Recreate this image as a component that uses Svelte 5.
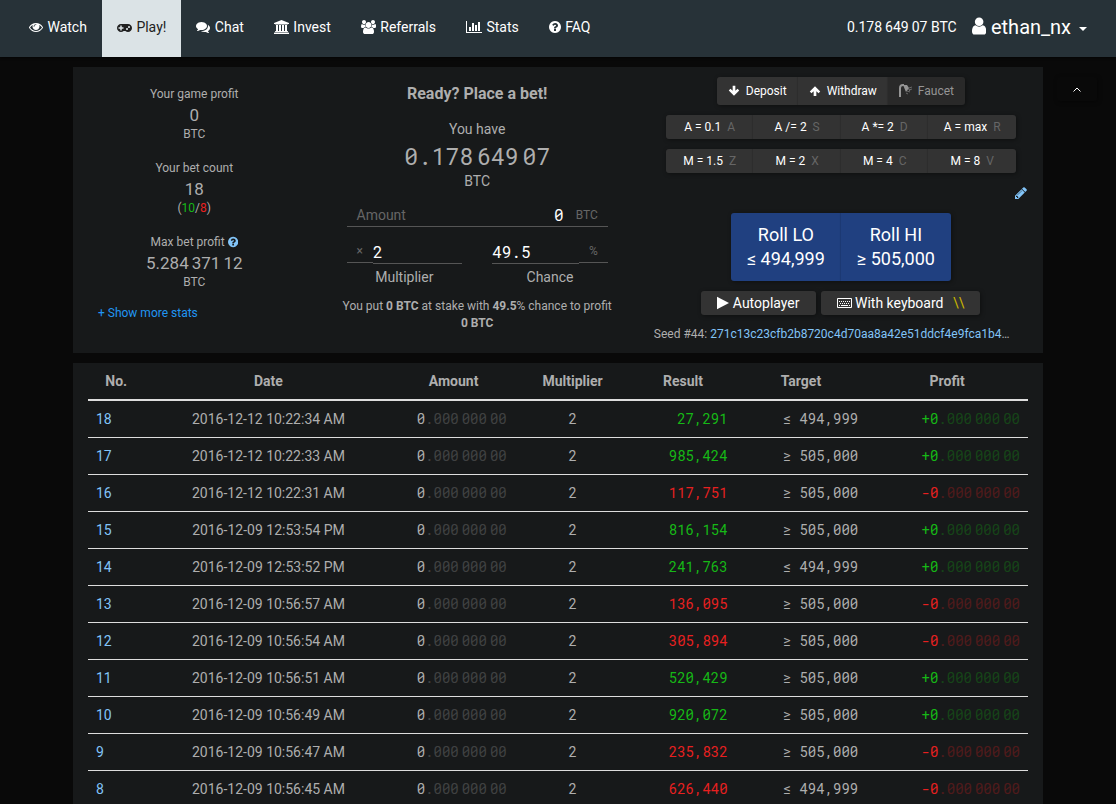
<script lang="ts">
  const icons: Record<string, { w: number; d: string }> = {
    eye: {
      w: 1792,
      d: "M1664 960q-152-236-381-353 61 104 61 225 0 185-131.5 316.5t-316.5 131.5-316.5-131.5-131.5-316.5q0-121 61-225-229 117-381 353 133 205 333.5 326.5t434.5 121.5 434.5-121.5 333.5-326.5zm-720-384q0-20-14-34t-34-14q-125 0-214.5 89.5t-89.5 214.5q0 20 14 34t34 14 34-14 14-34q0-86 61-147t147-61q20 0 34-14t14-34zm848 384q0 34-20 69-140 230-376.5 368.5t-499.5 138.5-499.5-139-376.5-368q-20-35-20-69t20-69q140-229 376.5-368t499.5-139 499.5 139 376.5 368q20 35 20 69z",
    },
    gamepad: {
      w: 1920,
      d: "M832 1088v-128q0-14-9-23t-23-9h-192v-192q0-14-9-23t-23-9h-128q-14 0-23 9t-9 23v192h-192q-14 0-23 9t-9 23v128q0 14 9 23t23 9h192v192q0 14 9 23t23 9h128q14 0 23-9t9-23v-192h192q14 0 23-9t9-23zm576 64q0-53-37.5-90.5t-90.5-37.5-90.5 37.5-37.5 90.5 37.5 90.5 90.5 37.5 90.5-37.5 37.5-90.5zm256-256q0-53-37.5-90.5t-90.5-37.5-90.5 37.5-37.5 90.5 37.5 90.5 90.5 37.5 90.5-37.5 37.5-90.5zm256 128q0 212-150 362t-362 150q-192 0-338-128h-220q-146 128-338 128-212 0-362-150t-150-362 150-362 362-150h896q212 0 362 150t150 362z",
    },
    comments: {
      w: 1792,
      d: "M1408 768q0 139-94 257t-256.5 186.5-353.5 68.5q-86 0-176-16-124 88-278 128-36 9-86 16h-3q-11 0-20.5-8t-11.5-21q-1-3-1-6.5t.5-6.5 2-6l2.5-5 3.5-5.5 4-5 4.5-5 4-4.5q5-6 23-25t26-29.5 22.5-29 25-38.5 20.5-44q-124-72-195-177t-71-224q0-139 94-257t256.5-186.5 353.5-68.5 353.5 68.5 256.5 186.5 94 257zm384 256q0 120-71 224.5t-195 176.5q10 24 20.5 44t25 38.5 22.5 29 26 29.5 23 25q1 1 4 4.5t4.5 5 4 5 3.5 5.5l2.5 5 2 6 .5 6.5-1 6.5q-3 14-13 22t-22 7q-50-7-86-16-154-40-278-128-90 16-176 16-271 0-472-132 58 4 88 4 161 0 309-45t264-129q125-92 192-212t67-254q0-77-23-152 129 71 204 178t75 230z",
    },
    bank: {
      w: 1920,
      d: "M960 0l960 384v128h-128q0 26-20.5 45t-48.5 19h-1526q-28 0-48.5-19t-20.5-45h-128v-128zm-704 640h256v768h128v-768h256v768h128v-768h256v768h128v-768h256v768h59q28 0 48.5 19t20.5 45v64h-1664v-64q0-26 20.5-45t48.5-19h59v-768zm1595 960q28 0 48.5 19t20.5 45v128h-1920v-128q0-26 20.5-45t48.5-19h1782z",
    },
    users: {
      w: 1920,
      d: "M593 896q-162 5-265 128h-134q-82 0-138-40.5t-56-118.5q0-353 124-353 6 0 43.5 21t97.5 42.5 119 21.5q67 0 133-23-5 37-5 66 0 159 93 256zm1071 637q0 120-73 189.5t-194 69.5h-874q-121 0-194-69.5t-73-189.5q0-53 3.5-103.5t14-109 26.5-108.5 43-97.5 62-81 85.5-53.5 111.5-20q10 0 43 21.5t73 48 107 48 135 21.5 135-21.5 107-48 73-48 43-21.5q61 0 111.5 20t85.5 53.5 62 81 43 97.5 26.5 108.5 14 109 3.5 103.5zm-1024-1277q0 106-75 181t-181 75-181-75-75-181 75-181 181-75 181 75 75 181zm704 384q0 159-112.5 271.5t-271.5 112.5-271.5-112.5-112.5-271.5 112.5-271.5 271.5-112.5 271.5 112.5 112.5 271.5zm576 225q0 78-56 118.5t-138 40.5h-134q-103-123-265-128 93-97 93-256 0-29-5-66 66 23 133 23 59 0 119-21.5t97.5-42.5 43.5-21q124 0 124 353zm-128-609q0 106-75 181t-181 75-181-75-75-181 75-181 181-75 181 75 75 181z",
    },
    chart: {
      w: 2048,
      d: "M640 896v512h-256v-512h256zm384-512v1024h-256v-1024h256zm1024 1152v128h-2048v-1536h128v1408h1920zm-640-896v768h-256v-768h256zm384-384v1152h-256v-1152h256z",
    },
    question: {
      w: 1536,
      d: "M896 1376v-192q0-14-9-23t-23-9h-192q-14 0-23 9t-9 23v192q0 14 9 23t23 9h192q14 0 23-9t9-23zm256-672q0-88-55.5-163t-138.5-116-170-41q-243 0-371 213-15 24 8 42l132 100q7 6 19 6 16 0 25-12 53-68 86-92 34-24 86-24 48 0 85.5 26t37.5 59q0 38-20 61t-68 45q-63 28-115.5 86.5t-52.5 125.5v36q0 14 9 23t23 9h192q14 0 23-9t9-23q0-19 21.5-49.5t54.5-49.5q32-18 49-28.5t46-35 44.5-48 28-60.5 12.5-81zm384 192q0 209-103 385.5t-279.5 279.5-385.5 103-385.5-103-279.5-279.5-103-385.5 103-385.5 279.5-279.5 385.5-103 385.5 103 279.5 279.5 103 385.5z",
    },
    user: {
      w: 1280,
      d: "M1280 1399q0 109-62.5 187t-150.5 78h-854q-88 0-150.5-78t-62.5-187q0-85 8.5-160.5t31.5-152 58.5-131 94-89 134.5-34.5q131 128 313 128t313-128q76 0 134.5 34.5t94 89 58.5 131 31.5 152 8.5 160.5zm-256-887q0 159-112.5 271.5t-271.5 112.5-271.5-112.5-112.5-271.5 112.5-271.5 271.5-112.5 271.5 112.5 112.5 271.5z",
    },
    pencil: {
      w: 1792,
      d: "M491 1536l91-91-235-235-91 91v107h128v128h107zm523-928q0-22-22-22-10 0-17 7l-542 542q-7 7-7 17 0 22 22 22 10 0 17-7l542-542q7-7 7-17zm-54-192l416 416-832 832h-416v-416zm683 96q0 53-37 90l-166 166-416-416 166-165q36-38 90-38 53 0 91 38l235 234q37 39 37 91z",
    },
    play: { w: 1536, d: "M0 96L1536 896L0 1696z" },
    down: {
      w: 1792,
      d: "M696 120h400v740l330-300 250 250-780 800-780-800 250-250 330 300z",
    },
    up: {
      w: 1792,
      d: "M696 1660h400v-740l330 300 250-250-780-800-780 800 250 250 330-300z",
    },
  };

  const nav = [
    { icon: "eye", label: "Watch" },
    { icon: "gamepad", label: "Play!", active: true },
    { icon: "comments", label: "Chat" },
    { icon: "bank", label: "Invest" },
    { icon: "users", label: "Referrals" },
    { icon: "chart", label: "Stats" },
    { icon: "question", label: "FAQ" },
  ];

  const amountKeys = [
    ["A = 0.1", "A"],
    ["A /= 2", "S"],
    ["A *= 2", "D"],
    ["A = max", "R"],
  ];
  const multiplierKeys = [
    ["M = 1.5", "Z"],
    ["M = 2", "X"],
    ["M = 4", "C"],
    ["M = 8", "V"],
  ];

  const LO = "≤ 494,999";
  const HI = "≥ 505,000";

  const bets = [
    { no: 18, date: "2016-12-12 10:22:34 AM", result: "27,291", target: LO, win: true },
    { no: 17, date: "2016-12-12 10:22:33 AM", result: "985,424", target: HI, win: true },
    { no: 16, date: "2016-12-12 10:22:31 AM", result: "117,751", target: HI, win: false },
    { no: 15, date: "2016-12-09 12:53:54 PM", result: "816,154", target: HI, win: true },
    { no: 14, date: "2016-12-09 12:53:52 PM", result: "241,763", target: LO, win: true },
    { no: 13, date: "2016-12-09 10:56:57 AM", result: "136,095", target: HI, win: false },
    { no: 12, date: "2016-12-09 10:56:54 AM", result: "305,894", target: HI, win: false },
    { no: 11, date: "2016-12-09 10:56:51 AM", result: "520,429", target: HI, win: true },
    { no: 10, date: "2016-12-09 10:56:49 AM", result: "920,072", target: HI, win: true },
    { no: 9, date: "2016-12-09 10:56:47 AM", result: "235,832", target: HI, win: false },
    { no: 8, date: "2016-12-09 10:56:45 AM", result: "626,440", target: LO, win: false },
  ];

  let amount = $state("0");
  let multiplier = $state("2");
  let chance = $state("49.5");
</script>

{#snippet icon(name: string)}
  <svg
    class="icon"
    viewBox="0 0 {icons[name].w} 1792"
    style:width="{icons[name].w / 1792}em"
    aria-hidden="true"
  >
    <path d={icons[name].d} />
  </svg>
{/snippet}

{#snippet grouped(head: string, mid: string, tail: string)}
  {head}<span class="grp">{mid}</span><span class="grp">{tail}</span>
{/snippet}

{#snippet keyRow(keys: string[][])}
  <div class="btn-group keys">
    {#each keys as [label, key]}
      <button class="btn" type="button">{label} <span class="hotkey">{key}</span></button>
    {/each}
  </div>
{/snippet}

<nav class="navbar">
  <ul class="menu">
    {#each nav as item}
      <li>
        <a href="#{item.icon}" class:active={item.active}>{@render icon(item.icon)} {item.label}</a>
      </li>
    {/each}
  </ul>
  <div class="account">
    <span class="balance">{@render grouped("0.178", "649", "07")} BTC</span>
    <a href="#account" class="username">{@render icon("user")} ethan_nx <span class="caret"></span></a>
  </div>
</nav>

<div class="page">
  <main>
    <section class="panel game">
      <div class="stats">
        <div class="stat">
          <div>Your game profit</div>
          <div class="value">0</div>
          <div class="unit">BTC</div>
        </div>
        <div class="stat">
          <div>Your bet count</div>
          <div class="value">18</div>
          <div class="unit">(<span class="win">10</span>/<span class="lose">8</span>)</div>
        </div>
        <div class="stat">
          <div>Max bet profit <span class="help">{@render icon("question")}</span></div>
          <div class="value">{@render grouped("5.284", "371", "12")}</div>
          <div class="unit">BTC</div>
        </div>
        <a href="#stats" class="more">+ Show more stats</a>
      </div>

      <div class="bet">
        <h1>Ready? Place a bet!</h1>
        <div class="have">You have</div>
        <div class="total">{@render grouped("0.178", "649", "07")}</div>
        <div class="currency">BTC</div>
        <div class="fields">
          <div class="field amount">
            <label for="amount">Amount</label>
            <input id="amount" type="text" bind:value={amount} />
            <span>BTC</span>
          </div>
          <div class="pair">
            <div class="half">
              <div class="field split">
                <span class="addon">×</span>
                <input id="multiplier" type="text" bind:value={multiplier} />
              </div>
              <label for="multiplier">Multiplier</label>
            </div>
            <div class="half">
              <div class="field split">
                <input id="chance" type="text" bind:value={chance} />
                <span class="addon">%</span>
              </div>
              <label for="chance">Chance</label>
            </div>
          </div>
        </div>
        <p class="summary">
          You put <b>0 BTC</b> at stake with <b>49.5</b>% chance to profit <b class="nowrap">0 BTC</b>
        </p>
      </div>

      <div class="controls">
        <div class="btn-group wallet">
          <button class="btn" type="button">{@render icon("down")} Deposit</button>
          <button class="btn" type="button">{@render icon("up")} Withdraw</button>
          <button class="btn" type="button" disabled>
            <svg class="faucet" viewBox="0 0 14 14" aria-hidden="true">
              <path d="M1 13V4Q1 1 4 1H5" fill="none" stroke="currentColor" stroke-width="2" />
              <path d="M4 1H8L10 4L7 8Z" fill="currentColor" />
              <path
                d="M10 4L13 3M10 6L13 5M8 7L11 8M7 9L9 10M8 3L11 7"
                fill="none"
                stroke="currentColor"
                opacity=".6"
              />
            </svg>
            Faucet
          </button>
        </div>
        {@render keyRow(amountKeys)}
        {@render keyRow(multiplierKeys)}
        <button class="edit" type="button" aria-label="Edit hotkeys">{@render icon("pencil")}</button>
        <div class="btn-group roll">
          <button class="btn" type="button">Roll LO<br />{LO}</button>
          <button class="btn" type="button">Roll HI<br />{HI}</button>
        </div>
        <div class="modes">
          <button class="btn" type="button">{@render icon("play")} Autoplayer</button>
          <button class="btn" type="button">
            <svg class="keyboard" viewBox="0 0 15 10" aria-hidden="true">
              <path d="M.5 .5H14.5V9.5H.5Z" fill="none" stroke="currentColor" />
              <path
                d="M2 3.5H13M3 5.5H13"
                fill="none"
                stroke="currentColor"
                stroke-dasharray="1 1"
              />
              <path d="M2 7.5H3M4 7.5H11M12 7.5H13" fill="none" stroke="currentColor" />
            </svg>
            With keyboard <span class="slashes">\\</span>
          </button>
        </div>
        <div class="seed">
          Seed #44: <a href="#seed">271c13c23cfb2b8720c4d70aa8a42e51ddcf4e9fca1b4</a>…
        </div>
      </div>
    </section>

    <section class="panel history">
      <table>
        <colgroup>
          <col class="c-no" />
          <col class="c-date" />
          <col class="c-amount" />
          <col class="c-mult" />
          <col class="c-result" />
          <col class="c-target" />
          <col />
        </colgroup>
        <thead>
          <tr>
            <th>No.</th>
            <th>Date</th>
            <th>Amount</th>
            <th>Multiplier</th>
            <th>Result</th>
            <th>Target</th>
            <th>Profit</th>
          </tr>
        </thead>
        <tbody>
          {#each bets as bet}
            <tr>
              <td><a href="#bet-{bet.no}">{bet.no}</a></td>
              <td class="center">{bet.date}</td>
              <td class="num">0<span class="dim">{@render grouped(".000", "000", "00")}</span></td>
              <td class="center">2</td>
              <td class="num" class:win={bet.win} class:lose={!bet.win}>{bet.result}</td>
              <td class="num">{bet.target}</td>
              <td class="num" class:win={bet.win} class:lose={!bet.win}>
                {bet.win ? "+" : "-"}0<span class="dim">{@render grouped(".000", "000", "00")}</span>
              </td>
            </tr>
          {/each}
        </tbody>
      </table>
    </section>
  </main>
  <button class="collapse" type="button" aria-label="Collapse">
    <svg viewBox="0 0 8 5" aria-hidden="true"><path d="M.5 4.5L4 1L7.5 4.5" /></svg>
  </button>
</div>

<style>
  :global(body) {
    background: #090909;
    color: #aeaeae;
    font-family: Roboto, "Liberation Sans", sans-serif;
    font-size: 12px;
    line-height: 20px;
    overflow: hidden;
  }

  a {
    color: #82c4f8;
    text-decoration: none;
  }

  button,
  input {
    font: inherit;
    color: inherit;
    margin: 0;
    padding: 0;
    border: 0;
    background: none;
  }

  .icon {
    height: 1em;
    fill: currentColor;
    vertical-align: -2px;
  }

  .grp {
    margin-left: 3px;
  }

  .win {
    color: #16b816;
  }

  .lose {
    color: #e82020;
  }

  /* Navbar */
  .navbar {
    display: flex;
    justify-content: space-between;
    height: 57px;
    padding: 0 14px;
    background: #273238;
    color: #fff;
    font-size: 14px;
    box-shadow: 0 1px 2px rgba(0, 0, 0, 0.5);
  }

  .menu {
    display: flex;
    margin: 0;
    padding: 0;
    list-style: none;
  }

  .menu a,
  .username {
    display: block;
    padding: 0 15px;
    line-height: 55px;
    color: #fff;
  }

  .menu a.active {
    height: 57px;
    background: #dbe3e6;
    color: #212121;
  }

  .menu .icon {
    margin-right: 1px;
  }

  .account {
    display: flex;
    line-height: 55px;
  }

  .username {
    font-size: 20px;
  }

  .caret {
    display: inline-block;
    margin-left: 3px;
    border: 4px solid transparent;
    border-top-color: #fff;
    border-bottom: 0;
    vertical-align: middle;
  }

  /* Page */
  .page {
    display: grid;
    grid-template-columns: 1fr minmax(0, 970px) 1fr;
    align-items: start;
    padding-top: 10px;
  }

  main {
    grid-column: 2;
  }

  .panel {
    margin-bottom: 10px;
    background: #17191a;
  }

  .collapse {
    width: 40px;
    height: 24px;
    margin: 10px 0 0 14px;
    border-radius: 3px;
    box-shadow: 1px 1px 4px rgba(0, 0, 0, 0.4);
    line-height: 0;
  }

  .collapse svg {
    width: 8px;
    height: 5px;
    fill: none;
    stroke: #fff;
  }

  .game {
    display: grid;
    grid-template-columns: 3fr 4fr 5fr;
    text-align: center;
  }

  .game > div {
    min-width: 0;
    padding: 10px 15px;
  }

  /* Stats */
  .stat {
    padding-top: 7px;
    margin-bottom: 9px;
  }

  .value {
    font-size: 17px;
    line-height: 22px;
  }

  .unit {
    line-height: 16px;
  }

  .help {
    color: #82c4f8;
  }

  .more {
    display: block;
    margin-top: 13px;
    padding-left: 10px;
    text-align: left;
    color: #2196f3;
  }

  /* Bet form */
  h1 {
    margin: 0;
    padding: 7px 0 6px;
    font-size: 16px;
    line-height: 20px;
    font-weight: 700;
  }

  .have {
    margin: 9px 0 1px;
    font-size: 14px;
  }

  .total {
    font-family: "Roboto Mono", "DejaVu Sans Mono", monospace;
    font-size: 23px;
    line-height: 32px;
  }

  .total .grp {
    margin-left: 4px;
  }

  .currency {
    font-size: 14px;
    line-height: 18px;
  }

  .fields {
    padding: 14px 16px 0;
    font-size: 14px;
  }

  .field {
    display: flex;
    align-items: center;
    color: #666;
  }

  .field input {
    flex: 1;
    min-width: 0;
    color: #fff;
    font-family: "Roboto Mono", "DejaVu Sans Mono", monospace;
    font-size: 16px;
    line-height: 22px;
  }

  .field span {
    font-size: 12px;
  }

  .amount {
    gap: 12px;
    padding: 0 10px;
    border-bottom: 1px solid #555;
  }

  .amount input {
    text-align: right;
  }

  .pair {
    display: grid;
    grid-template-columns: minmax(0, 1fr) minmax(0, 1fr);
    gap: 30px;
    margin-top: 14px;
  }

  .half > label {
    display: block;
    line-height: 26px;
  }

  .split {
    align-items: flex-start;
  }

  .split input {
    border-bottom: 1px solid #555;
  }

  .addon {
    padding: 0 10px;
    border-bottom: 1px solid #555;
    line-height: 21px;
  }

  .summary {
    margin: 8px 0 0;
    line-height: 17px;
  }

  .nowrap {
    white-space: nowrap;
  }

  /* Controls */
  .controls {
    display: flex;
    flex-direction: column;
    align-items: center;
  }

  .btn {
    padding: 2px 12px;
    background: #333;
    color: #fff;
    cursor: pointer;
  }

  .btn:disabled {
    background: #292929;
    color: #959595;
  }

  .btn-group {
    display: flex;
    border-radius: 3px;
    overflow: hidden;
    box-shadow: 1px 1px 4px rgba(0, 0, 0, 0.4);
  }

  .btn-group .btn + .btn {
    box-shadow: -1px 0 1px rgba(0, 0, 0, 0.1);
  }

  .wallet .btn {
    height: 28px;
    padding: 0 11px;
  }

  .wallet .icon {
    margin-right: 3px;
  }

  .faucet {
    width: 14px;
    height: 14px;
    margin-right: 2px;
    vertical-align: -3px;
  }

  .keys {
    width: 100%;
    max-width: 350px;
    margin-top: 10px;
  }

  .keys .btn {
    flex: 1;
    padding: 2px 0;
  }

  .hotkey {
    margin-left: 3px;
    color: #666;
  }

  .edit {
    align-self: flex-end;
    height: 20px;
    margin-top: 10px;
    color: #82c4f8;
    font-size: 14px;
  }

  .roll {
    margin-top: 10px;
  }

  .roll .btn {
    width: 110px;
    height: 68px;
    padding: 0;
    background: #204080;
    font-size: 18px;
    line-height: 24px;
  }

  .modes {
    display: flex;
    gap: 5px;
    margin-top: 10px;
  }

  .modes .btn {
    padding: 2px 16px;
    border-radius: 3px;
    font-size: 14px;
    box-shadow: 1px 1px 4px rgba(0, 0, 0, 0.4);
  }

  .keyboard {
    width: 15px;
    height: 10px;
  }

  .slashes {
    margin-left: 6px;
    color: #c8b400;
  }

  .seed {
    width: 100%;
    margin-top: 10px;
    overflow: hidden;
    line-height: 18px;
    text-align: left;
    text-overflow: ellipsis;
    white-space: nowrap;
  }

  /* History */
  .history {
    padding: 0 15px;
  }

  table {
    width: 100%;
    table-layout: fixed;
    border-collapse: separate;
    border-spacing: 0;
    font-size: 14px;
  }

  .c-no {
    width: 6%;
  }

  .c-date {
    width: 26.4%;
  }

  .c-amount {
    width: 13%;
  }

  .c-mult {
    width: 12.3%;
  }

  .c-result {
    width: 11.2%;
  }

  .c-target {
    width: 13.9%;
  }

  th,
  td {
    padding: 8px;
    white-space: nowrap;
  }

  th {
    border-bottom: 2px solid #ddd;
    font-weight: 700;
  }

  td {
    border-bottom: 1px solid #ddd;
    text-align: left;
  }

  .center {
    text-align: center;
  }

  .num {
    font-family: "Roboto Mono", "DejaVu Sans Mono", monospace;
    line-height: 20px;
    text-align: right;
  }

  .dim {
    opacity: 0.27;
  }
</style>
